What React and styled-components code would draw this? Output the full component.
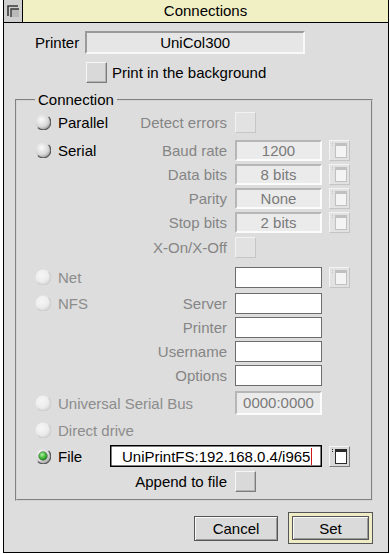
import React from 'react';
import styled, { createGlobalStyle } from 'styled-components';

// Global

const Global = createGlobalStyle`
  html, body {
    margin: 0;
    padding: 0;
    background: #ffffff;
  }
  body {
    font-family: "Liberation Sans", Arial, sans-serif;
    font-size: 15px;
    color: #000;
  }
`;

// Window chrome

const Window = styled.div`
  box-sizing: border-box;
  width: 386px;
  height: 553px;
  margin-left: 3px;
  border: 1px solid #000;
  border-top: 0;
  background: #dddddd;
  display: flex;
  flex-direction: column;
`;

const TitleBar = styled.div`
  display: flex;
  height: 22px;
  border-bottom: 1px solid #000;
  background: #f1efc4;
`;

const BackButton = styled.div`
  width: 18px;
  border-right: 1px solid #000;
  background: #cfcfcf;
  display: flex;
  align-items: center;
  justify-content: center;
`;

const Title = styled.div`
  flex: 1;
  text-align: center;
  line-height: 22px;
`;

const Body = styled.div`
  flex: 1;
  display: flex;
  flex-direction: column;
  padding: 8px 15px 0 11px;
`;

// Top part

const PrinterRow = styled.div`
  display: flex;
  align-items: center;
  gap: 6px;
  height: 23px;
  padding-left: 20px;
`;

const PrinterField = styled.div`
  box-sizing: border-box;
  width: 220px;
  height: 23px;
  background: #e6e6e6;
  border: 2px solid;
  border-color: #9a9a9a #f8f8f8 #f8f8f8 #9a9a9a;
  text-align: center;
  line-height: 19px;
`;

const CheckRow = styled.div`
  display: flex;
  align-items: center;
  gap: 5px;
  height: 21px;
  margin: 8px 0 0 71px;
`;

const OptionBox = styled.div`
  box-sizing: border-box;
  width: 21px;
  height: 21px;
  flex: none;
  background: ${p => (p.$off ? '#e2e2e2' : '#d9d9d9')};
  border: 1px solid;
  border-color: ${p => (p.$off ? '#f2f2f2 #c6c6c6 #c6c6c6 #f2f2f2' : '#f6f6f6 #7c7c7c #7c7c7c #f6f6f6')};
  box-shadow: ${p => (p.$off ? 'none' : 'inset -1px -1px 0 #b4b4b4')};
`;

// Connection group

const Frame = styled.fieldset`
  margin: 8px 0 0 0;
  padding: 0 21px 6px 18px;
  border: 2px groove #d4d4d4;
  min-width: 0;
`;

const Legend = styled.legend`
  padding: 0 3px;
  font-size: 15px;
`;

const Row = styled.div`
  display: flex;
  align-items: center;
  height: 24px;
  margin-top: ${p => p.$mt || 0}px;
`;

const RadioOption = styled.div`
  display: flex;
  align-items: center;
  gap: 7px;
  color: ${p => (p.$off ? '#8c8c8c' : '#000')};
  white-space: nowrap;
`;

const SideLabel = styled.div`
  flex: 1;
  text-align: right;
  padding-right: 8px;
  color: ${p => (p.$off ? '#858585' : '#000')};
  white-space: nowrap;
`;

const Slot = styled.div`
  width: 87px;
  flex: none;
  display: flex;
  align-items: center;
`;

const MenuSlot = styled.div`
  width: 21px;
  flex: none;
  margin-left: 7px;
`;

const GreyField = styled.div`
  box-sizing: border-box;
  width: 87px;
  height: ${p => p.$h || 21}px;
  background: #ebebeb;
  border: 2px solid;
  border-color: #b6b6b6 #fbfbfb #fbfbfb #b6b6b6;
  color: #7a7a7a;
  text-align: center;
  line-height: ${p => (p.$h || 21) - 4}px;
`;

const WhiteField = styled.div`
  box-sizing: border-box;
  width: 87px;
  height: 21px;
  background: #ffffff;
  border: 1px solid #6c6c6c;
`;

const FileField = styled.div`
  box-sizing: border-box;
  width: 212px;
  height: 22px;
  margin-left: auto;
  background: #ffffff;
  border: 1px solid #000;
  box-shadow: inset 0 0 0 0.5px #000;
  padding-left: 11px;
  display: flex;
  align-items: center;
  white-space: nowrap;
`;

const Caret = styled.span`
  display: inline-block;
  width: 1px;
  height: 17px;
  background: #d01818;
  margin-left: 1px;
`;

const PopupBox = styled.div`
  box-sizing: border-box;
  width: 21px;
  height: 21px;
  border: 1px solid;
  border-color: ${p => (p.$off ? '#f4f4f4 #c4c4c4 #c4c4c4 #f4f4f4' : '#f6f6f6 #7c7c7c #7c7c7c #f6f6f6')};
  background: ${p => (p.$off ? '#e2e2e2' : '#d9d9d9')};
  display: flex;
`;

// Action buttons

const ActionRow = styled.div`
  display: flex;
  justify-content: flex-end;
  align-items: center;
  gap: 10px;
  margin-top: 11px;
`;

const Button = styled.button`
  box-sizing: border-box;
  width: ${p => p.$w || 84}px;
  height: ${p => p.$h || 25}px;
  padding: 0;
  font-family: inherit;
  font-size: 15px;
  color: #000;
  background: #dadada;
  border: 1px solid #555;
  box-shadow: inset 1px 1px 0 #fafafa, inset -1px -1px 0 #9a9a9a;
`;

const DefaultRing = styled.div`
  box-sizing: border-box;
  width: 85px;
  height: 32px;
  padding: 3px;
  border: 1px solid #555;
  background: #efedc6;
  display: flex;
`;

// Drawings

function BackIcon() {
  return (
    <svg width="13" height="13" viewBox="0 0 13 13">
      <path d="M1 11 V1 H11" stroke="#3a3a3a" strokeWidth="1.6" fill="none" />
      <rect x="4" y="4" width="8" height="8" fill="#b9b9b9" />
      <path d="M4 12 V4 H12" stroke="#3a3a3a" strokeWidth="1.4" fill="none" />
    </svg>
  );
}

function Radio({ off, on }) {
  const id = off ? 'rOff' : on ? 'rOn' : 'rNorm';
  return (
    <svg width="16" height="16" viewBox="0 0 16 16" style={{ flex: 'none' }}>
      <defs>
        <radialGradient id={id} cx="40%" cy="35%" r="70%">
          <stop offset="0" stopColor={off ? '#f6f6f6' : '#fafafa'} />
          <stop offset="0.65" stopColor={off ? '#ececec' : '#d8d8d8'} />
          <stop offset="1" stopColor={off ? '#d6d6d6' : '#9c9c9c'} />
        </radialGradient>
        <radialGradient id="greenDot" cx="40%" cy="35%" r="70%">
          <stop offset="0" stopColor="#b8f0a8" />
          <stop offset="0.5" stopColor="#48c040" />
          <stop offset="1" stopColor="#1c7a18" />
        </radialGradient>
      </defs>
      <circle cx="8" cy="8" r="7.5" fill={`url(#${id})`} />
      <path
        d="M13.6 2.9 A7.3 7.3 0 0 1 2.9 13.6"
        stroke={off ? '#cfcfcf' : '#5a5a5a'}
        strokeWidth="1.3"
        fill="none"
      />
      {on && <circle cx="8" cy="8" r="4.3" fill="url(#greenDot)" stroke="#4a6a48" strokeWidth="0.6" />}
    </svg>
  );
}

function PopupIcon({ off }) {
  const c = off ? '#c0c0c0' : '#2a2a2a';
  return (
    <PopupBox $off={off}>
      <svg width="19" height="19" viewBox="0 0 19 19">
        <path d="M2.5 2 V5" stroke={c} strokeWidth="1" strokeDasharray="1 1" />
        <rect x="5.5" y="2.5" width="11" height="14" fill={off ? '#f4f4f4' : '#ffffff'} stroke={c} strokeWidth="1" />
        <rect x="5.5" y="2.5" width="11" height="2.5" fill={c} />
      </svg>
    </PopupBox>
  );
}

// Page

const serialRows = [
  { label: 'Data bits', value: '8 bits' },
  { label: 'Parity', value: 'None' },
  { label: 'Stop bits', value: '2 bits' },
];

const nfsRows = ['Printer', 'Username', 'Options'];

export default function App() {
  return (
    <>
      <Global />
      <Window>
        <TitleBar>
          <BackButton>
            <BackIcon />
          </BackButton>
          <Title>Connections</Title>
        </TitleBar>
        <Body>
          <PrinterRow>
            <span>Printer</span>
            <PrinterField>UniCol300</PrinterField>
          </PrinterRow>
          <CheckRow>
            <OptionBox />
            <span>Print in the background</span>
          </CheckRow>

          <Frame>
            <Legend>Connection</Legend>

            <Row $mt={2}>
              <RadioOption>
                <Radio />
                Parallel
              </RadioOption>
              <SideLabel $off>Detect errors</SideLabel>
              <Slot>
                <OptionBox $off />
              </Slot>
              <MenuSlot />
            </Row>

            <Row $mt={4}>
              <RadioOption>
                <Radio />
                Serial
              </RadioOption>
              <SideLabel $off>Baud rate</SideLabel>
              <Slot>
                <GreyField>1200</GreyField>
              </Slot>
              <MenuSlot>
                <PopupIcon off />
              </MenuSlot>
            </Row>

            {serialRows.map(r => (
              <Row key={r.label}>
                <SideLabel $off>{r.label}</SideLabel>
                <Slot>
                  <GreyField>{r.value}</GreyField>
                </Slot>
                <MenuSlot>
                  <PopupIcon off />
                </MenuSlot>
              </Row>
            ))}

            <Row $mt={1}>
              <SideLabel $off>X-On/X-Off</SideLabel>
              <Slot>
                <OptionBox $off />
              </Slot>
              <MenuSlot />
            </Row>

            <Row $mt={6}>
              <RadioOption $off>
                <Radio off />
                Net
              </RadioOption>
              <SideLabel $off />
              <Slot>
                <WhiteField />
              </Slot>
              <MenuSlot>
                <PopupIcon off />
              </MenuSlot>
            </Row>

            <Row $mt={2}>
              <RadioOption $off>
                <Radio off />
                NFS
              </RadioOption>
              <SideLabel $off>Server</SideLabel>
              <Slot>
                <WhiteField />
              </Slot>
              <MenuSlot />
            </Row>

            {nfsRows.map(l => (
              <Row key={l}>
                <SideLabel $off>{l}</SideLabel>
                <Slot>
                  <WhiteField />
                </Slot>
                <MenuSlot />
              </Row>
            ))}

            <Row $mt={4}>
              <RadioOption $off>
                <Radio off />
                Universal Serial Bus
              </RadioOption>
              <SideLabel $off />
              <Slot>
                <GreyField $h={24}>0000:0000</GreyField>
              </Slot>
              <MenuSlot />
            </Row>

            <Row $mt={3}>
              <RadioOption $off>
                <Radio off />
                Direct drive
              </RadioOption>
            </Row>

            <Row $mt={2}>
              <RadioOption>
                <Radio on />
                File
              </RadioOption>
              <FileField>
                UniPrintFS:192.168.0.4/i965
                <Caret />
              </FileField>
              <MenuSlot>
                <PopupIcon />
              </MenuSlot>
            </Row>

            <Row $mt={1}>
              <SideLabel>Append to file</SideLabel>
              <Slot>
                <OptionBox />
              </Slot>
              <MenuSlot />
            </Row>
          </Frame>

          <ActionRow>
            <Button>Cancel</Button>
            <DefaultRing>
              <Button $w={77} $h={24}>Set</Button>
            </DefaultRing>
          </ActionRow>
        </Body>
      </Window>
    </>
  );
}
